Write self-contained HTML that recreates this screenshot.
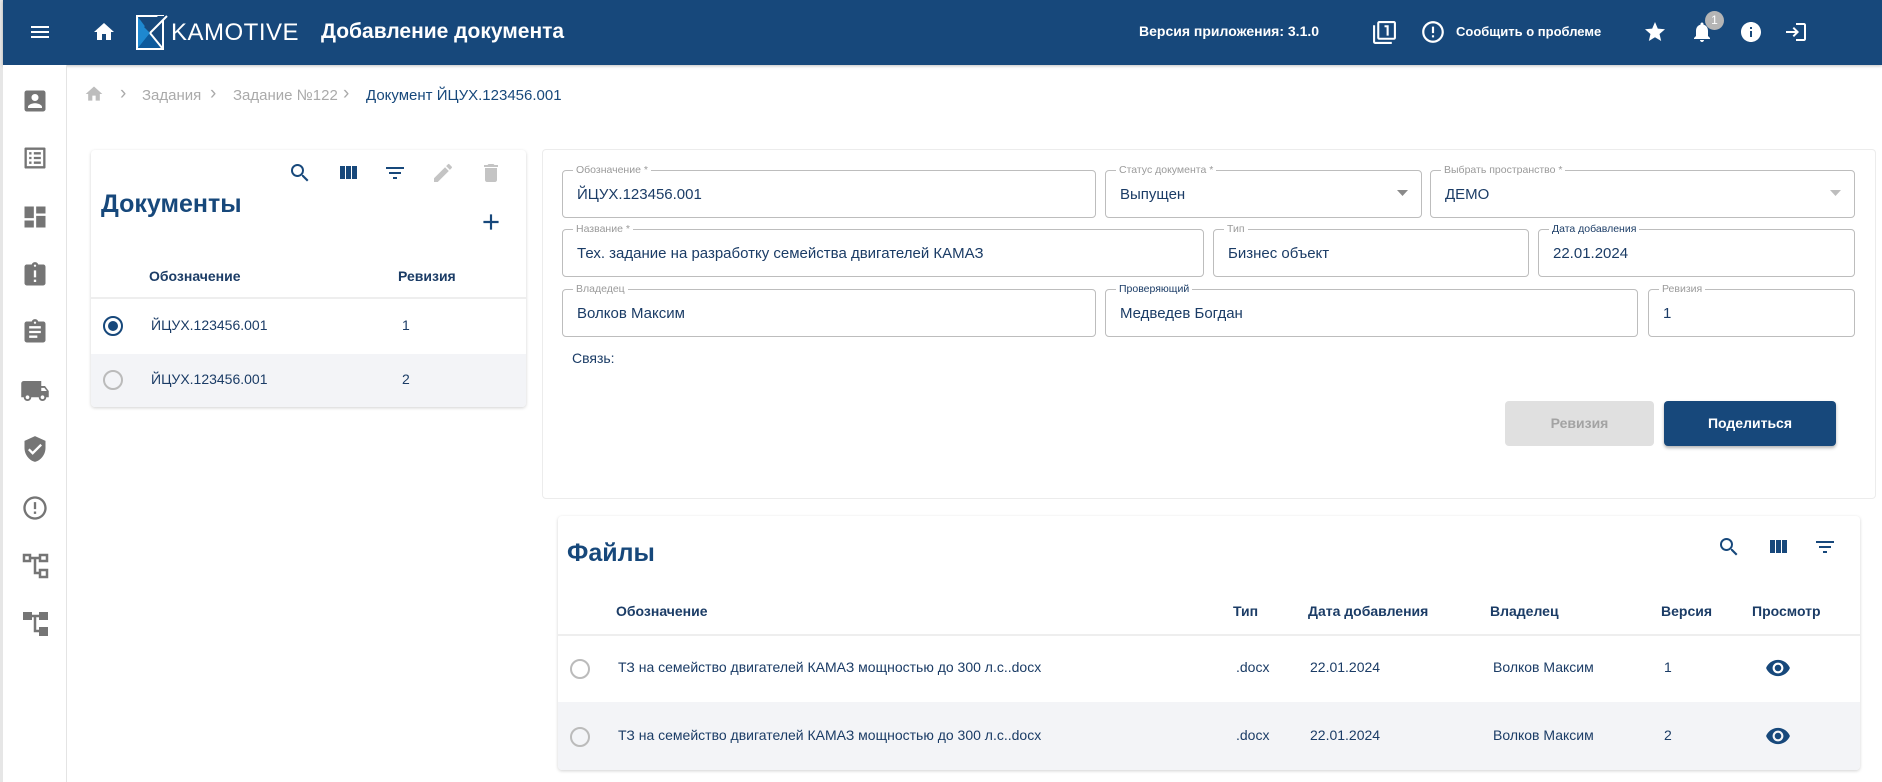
<!DOCTYPE html>
<html><head><meta charset="utf-8"><style>
*{box-sizing:border-box;margin:0;padding:0}
body{width:1882px;height:782px;overflow:hidden;background:#fff;font-family:"Liberation Sans","Noto Sans CJK SC",sans-serif;position:relative;color:#1b3c66}
.a{position:absolute}
svg{display:block}
.hdr{left:3px;top:0;width:1879px;height:65px;background:#17487b;box-shadow:0 1px 3px rgba(0,0,0,.25)}
.strip{left:0;top:0;width:3px;height:782px;background:#e6e6e6}
.side{left:3px;top:65px;width:64px;height:717px;border-right:1px solid #e4e4e4;background:#fff}
.w{color:#fff}
.card{background:#fff;border-radius:4px;box-shadow:0 1px 3px rgba(0,0,0,.18)}
.fld{position:absolute;border:1px solid #bdbdbd;border-radius:4px;height:48px}
.fld .l{position:absolute;top:-7px;left:10px;background:#fff;padding:0 3px;font-size:10.5px;color:#9a9a9a;line-height:12px}
.fld .l.d{color:#1b3c66}
.fld .v{position:absolute;left:14px;top:15px;font-size:15px;color:#1b3c66}
.th{font-size:14px;font-weight:bold;color:#1b3c66}
.td{font-size:14px;color:#1b3c66}
.radio{width:20px;height:20px;border:2px solid #bbb;border-radius:50%}
.ch{font-size:19px;color:#aaa}
</style></head><body>
<div class="a strip"></div>
<div class="a hdr"></div>
<svg class="a" style="left:28px;top:20px" width="24" height="24" viewBox="0 0 24 24"><path fill="#fff" d="M3 18h18v-2H3v2zm0-5h18v-2H3v2zm0-7v2h18V6H3z"/></svg>
<svg class="a" style="left:92px;top:20px" width="24" height="24" viewBox="0 0 24 24"><path fill="#fff" d="M10 20v-6h4v6h5v-8h3L12 3 2 12h3v8z"/></svg>
<svg class="a" style="left:136px;top:15px" width="34" height="35" viewBox="0 0 34 35"><rect x="1" y="1" width="26" height="33" fill="none" stroke="#fff" stroke-width="2"/><polygon points="2,2 2,33 14,18" fill="#1e88d0"/><polygon points="2,33 26,33 14,18" fill="#0d5a9c"/><polygon points="14,18 32,1 22,1 8,12" fill="#17487b"/><path d="M14 18 L31 1 M14 18 L27 34" stroke="#fff" stroke-width="2" fill="none"/></svg>
<div class="a w" style="left:171px;top:19px;font-size:24px;letter-spacing:0.5px">KAMOTIVE</div>
<div class="a w" style="left:321px;top:20px;font-size:21px;font-weight:bold">Добавление документа</div>
<div class="a w" style="left:1139px;top:23px;font-size:14px;font-weight:bold">Версия приложения: 3.1.0</div>
<svg class="a" style="left:1372px;top:20px" width="25" height="25" viewBox="0 0 24 24"><path fill="#fff" d="M3 5H1v16c0 1.1.9 2 2 2h16v-2H3V5zm11 10h2V5h-4v2h2v8zm7-14H7c-1.1 0-2 .9-2 2v14c0 1.1.9 2 2 2h14c1.1 0 2-.9 2-2V3c0-1.1-.9-2-2-2zm0 16H7V3h14v14z"/></svg>
<svg class="a" style="left:1420px;top:19px" width="26" height="26" viewBox="0 0 24 24"><path fill="#fff" d="M11 15h2v2h-2zm0-8h2v6h-2zm.99-5C6.47 2 2 6.48 2 12s4.47 10 9.99 10C17.52 22 22 17.52 22 12S17.520 2 11.99 2zM12 20c-4.42 0-8-3.58-8-8s3.58-8 8-8 8 3.58 8 8-3.58 8-8 8z"/></svg>
<div class="a w" style="left:1456px;top:24px;font-size:13px;font-weight:bold">Сообщить о проблеме</div>
<svg class="a" style="left:1643px;top:20px" width="24" height="24" viewBox="0 0 24 24"><path fill="#fff" d="M12 17.27L18.18 21l-1.64-7.03L22 9.24l-7.19-.61L12 2 9.19 8.630 2 9.24l5.46 4.73L5.82 21z"/></svg>
<svg class="a" style="left:1690px;top:20px" width="24" height="24" viewBox="0 0 24 24"><path fill="#fff" d="M12 22c1.1 0 2-.9 2-2h-4c0 1.1.89 2 2 2zm6-6v-5c0-3.07-1.64-5.64-4.5-6.32V4c0-.83-.67-1.5-1.5-1.5s-1.5.67-1.5 1.5v.68C7.63 5.36 6 7.92 6 11v5l-2 2v1h16v-1l-2-2z"/></svg>
<div class="a" style="left:1705px;top:11px;width:19px;height:19px;border-radius:50%;background:#b5b5b5;color:#fff;font-size:12px;text-align:center;line-height:19px">1</div>
<svg class="a" style="left:1739px;top:20px" width="24" height="24" viewBox="0 0 24 24"><path fill="#fff" d="M12 2C6.48 2 2 6.48 2 12s4.48 10 10 10 10-4.48 10-10S17.52 2 12 2zm1 15h-2v-6h2v6zm0-8h-2V7h2v2z"/></svg>
<svg class="a" style="left:1784px;top:20px" width="24" height="24" viewBox="0 0 24 24"><path fill="#fff" d="M10 7L8.6 8.4l2.6 2.6H2v2h9.2l-2.6 2.6L10 17l5-5-5-5zm10 12h-8v2h8c1.1 0 2-.9 2-2V5c0-1.1-.9-2-2-2h-8v2h8v14z"/></svg>

<div class="a side"></div>
<svg class="a" style="left:21px;top:87px" width="28" height="28" viewBox="0 0 24 24"><path fill="#757575" d="M3 5v14a2 2 0 002 2h14c1.1 0 2-.9 2-2V5c0-1.1-.9-2-2-2H5a2 2 0 00-2 2zm12 4c0 1.66-1.34 3-3 3s-3-1.34-3-3 1.34-3 3-3 3 1.34 3 3zm-9 8c0-2 4-3.1 6-3.1s6 1.1 6 3.1v1H6v-1z"/></svg>
<svg class="a" style="left:21px;top:144px" width="28" height="28" viewBox="0 0 24 24"><path fill="#757575" d="M19 5v14H5V5h14m1.1-2H3.9c-.5 0-.9.4-.9.9v16.2c0 .4.4.9.9.9h16.2c.4 0 .9-.5.9-.9V3.9c0-.5-.5-.9-.9-.9zM11 7h6v2h-6V7zm0 4h6v2h-6v-2zm0 4h6v2h-6zM7 7h2v2H7zm0 4h2v2H7zm0 4h2v2H7z"/></svg>
<svg class="a" style="left:21px;top:203px" width="28" height="28" viewBox="0 0 24 24"><path fill="#757575" d="M3 13h8V3H3v10zm0 8h8v-6H3v6zm10 0h8V11h-8v10zm0-18v6h8V3h-8z"/></svg>
<svg class="a" style="left:21px;top:261px" width="28" height="28" viewBox="0 0 24 24"><path fill="#757575" d="M19 3h-4.18C14.4 1.84 13.3 1 12 1c-1.3 0-2.4.84-2.82 2H5c-1.1 0-2 .9-2 2v14c0 1.1.9 2 2 2h14c1.1 0 2-.9 2-2V5c0-1.1-.9-2-2-2zm-6 15h-2v-2h2v2zm0-4h-2V8h2v6zm-1-9c-.55 0-1-.45-1-1s.45-1 1-1 1 .45 1 1-.45 1-1 1z"/></svg>
<svg class="a" style="left:21px;top:318px" width="28" height="28" viewBox="0 0 24 24"><path fill="#757575" d="M19 3h-4.18C14.4 1.84 13.3 1 12 1c-1.3 0-2.4.84-2.82 2H5c-1.1 0-2 .9-2 2v14c0 1.1.9 2 2 2h14c1.1 0 2-.9 2-2V5c0-1.1-.9-2-2-2zm-7 0c.55 0 1 .45 1 1s-.45 1-1 1-1-.45-1-1 .45-1 1-1zm2 14H7v-2h7v2zm3-4H7v-2h10v2zm0-4H7V7h10v2z"/></svg>
<svg class="a" style="left:20px;top:376px" width="30" height="30" viewBox="0 0 24 24"><path fill="#757575" d="M20 8h-3V4H3c-1.1 0-2 .9-2 2v11h2c0 1.66 1.34 3 3 3s3-1.34 3-3h6c0 1.66 1.34 3 3 3s3-1.34 3-3h2v-5l-3-4zM6 18.5c-.83 0-1.5-.67-1.5-1.5s.67-1.5 1.5-1.5 1.5.67 1.5 1.5-.67 1.5-1.5 1.5zm13.5-9l1.96 2.5H17V9.5h2.5zm-1.5 9c-.83 0-1.5-.67-1.5-1.5s.67-1.5 1.5-1.5 1.5.67 1.5 1.5-.67 1.5-1.5 1.5z"/></svg>
<svg class="a" style="left:21px;top:435px" width="28" height="28" viewBox="0 0 24 24"><path fill="#757575" d="M12 1L3 5v6c0 5.55 3.84 10.74 9 12 5.16-1.26 9-6.45 9-12V5l-9-4zm-2 16l-4-4 1.41-1.41L10 14.17l6.59-6.59L18 9l-8 8z"/></svg>
<svg class="a" style="left:21px;top:494px" width="28" height="28" viewBox="0 0 24 24"><path fill="#757575" d="M11 15h2v2h-2zm0-8h2v6h-2zm.99-5C6.47 2 2 6.48 2 12s4.47 10 9.99 10C17.52 22 22 17.52 22 12S17.52 2 11.99 2zM12 20c-4.42 0-8-3.58-8-8s3.58-8 8-8 8 3.58 8 8-3.58 8-8 8z"/></svg>
<svg class="a" style="left:22px;top:553px" width="28" height="26" viewBox="0 0 28 26"><g fill="none" stroke="#757575" stroke-width="2.5"><rect x="2" y="2" width="6" height="6"/><rect x="18" y="2" width="7" height="6"/><rect x="18" y="17" width="7" height="7"/><path d="M8 5h10M13 5v15h5"/></g></svg>
<svg class="a" style="left:22px;top:611px" width="28" height="26" viewBox="0 0 28 26"><g fill="#757575"><rect x="1" y="1" width="9" height="8"/><rect x="17" y="1" width="9" height="8"/><rect x="17" y="16" width="9" height="9"/></g><path d="M10 5h7M13 5v15h4" stroke="#757575" stroke-width="2.5" fill="none"/></svg>

<svg class="a" style="left:84px;top:84px" width="20" height="20" viewBox="0 0 24 24"><path fill="#bdbdbd" d="M10 20v-6h4v6h5v-8h3L12 3 2 12h3v8z"/></svg>
<div class="a ch" style="left:120px;top:83px">›</div>
<div class="a" style="left:142px;top:87px;font-size:15px;color:#aaa">Задания</div>
<div class="a ch" style="left:210px;top:83px">›</div>
<div class="a" style="left:233px;top:87px;font-size:15px;color:#aaa">Задание №122</div>
<div class="a ch" style="left:343px;top:83px">›</div>
<div class="a" style="left:366px;top:87px;font-size:15px;color:#17487b">Документ ЙЦУХ.123456.001</div>

<div class="a card" style="left:91px;top:150px;width:435px;height:257px;overflow:hidden">
 <div class="a" style="left:10px;top:40px;font-size:25px;color:#17487b;font-weight:bold">Документы</div>
 <svg class="a" style="left:197px;top:11px" width="24" height="24" viewBox="0 0 24 24"><path fill="#17487b" d="M15.5 14h-.79l-.28-.27A6.471 6.471 0 0016 9.5 6.5 6.5 0 109.5 16c1.61 0 3.09-.59 4.230-1.57l.27.28v.79l5 4.99L20.49 19l-4.99-5zm-6 0C7.01 14 5 11.99 5 9.5S7.01 5 9.5 5 14 7.01 14 9.5 11.99 14 9.5 14z"/></svg>
 <svg class="a" style="left:245px;top:11px" width="24" height="24" viewBox="0 0 24 24"><path fill="#17487b" d="M10 18h5V5h-5v13zm-6 0h5V5H4v13zM16 5v13h5V5h-5z"/></svg>
 <svg class="a" style="left:292px;top:11px" width="24" height="24" viewBox="0 0 24 24"><path fill="#17487b" d="M10 18h4v-2h-4v2zM3 6v2h18V6H3zm3 7h12v-2H6v2z"/></svg>
 <svg class="a" style="left:340px;top:11px" width="24" height="24" viewBox="0 0 24 24"><path fill="#c4c4c4" d="M3 17.25V21h3.75L17.81 9.94l-3.75-3.75L3 17.25zM20.71 7.04a.996.996 0 000-1.41l-2.34-2.34a.996.996 0 00-1.41 0l-1.83 1.83 3.75 3.75 1.83-1.83z"/></svg>
 <svg class="a" style="left:388px;top:11px" width="24" height="24" viewBox="0 0 24 24"><path fill="#c4c4c4" d="M6 19c0 1.1.9 2 2 2h8c1.1 0 2-.9 2-2V7H6v12zM19 4h-3.5l-1-1h-5l-1 1H5v2h14V4z"/></svg>
 <svg class="a" style="left:387px;top:59px" width="26" height="26" viewBox="0 0 24 24"><path fill="#17487b" d="M19 13h-6v6h-2v-6H5v-2h6V5h2v6h6v2z"/></svg>
 <div class="a th" style="left:58px;top:118px">Обозначение</div>
 <div class="a th" style="left:307px;top:118px">Ревизия</div>
 <div class="a" style="left:0;top:147px;width:435px;height:2px;background:#eee"></div>
 <div class="a" style="left:12px;top:166px;width:20px;height:20px;border:2px solid #17487b;border-radius:50%"><div style="margin:3px;width:10px;height:10px;border-radius:50%;background:#17487b"></div></div>
 <div class="a td" style="left:60px;top:167px">ЙЦУХ.123456.001</div>
 <div class="a td" style="left:311px;top:167px">1</div>
 <div class="a" style="left:0;top:204px;width:435px;height:53px;background:#f3f4f7"></div>
 <div class="a radio" style="left:12px;top:220px"></div>
 <div class="a td" style="left:60px;top:221px">ЙЦУХ.123456.001</div>
 <div class="a td" style="left:311px;top:221px">2</div>
</div>

<div class="a" style="left:542px;top:149px;width:1334px;height:350px;border:1px solid #ececec;border-radius:4px;background:#fff"></div>
<div class="fld" style="left:562px;top:170px;width:534px"><span class="l">Обозначение *</span><span class="v">ЙЦУХ.123456.001</span></div>
<div class="fld" style="left:1105px;top:170px;width:317px"><span class="l">Статус документа *</span><span class="v">Выпущен</span><svg class="a" style="right:12px;top:18px" width="12" height="8"><path d="M0 1h11l-5.5 6z" fill="#8a8a8a"/></svg></div>
<div class="fld" style="left:1430px;top:170px;width:425px"><span class="l">Выбрать пространство *</span><span class="v">ДЕМО</span><svg class="a" style="right:12px;top:18px" width="12" height="8"><path d="M0 1h11l-5.5 6z" fill="#bdbdbd"/></svg></div>
<div class="fld" style="left:562px;top:229px;width:642px"><span class="l">Название *</span><span class="v">Тех. задание на разработку семейства двигателей КАМАЗ</span></div>
<div class="fld" style="left:1213px;top:229px;width:316px"><span class="l">Тип</span><span class="v">Бизнес объект</span></div>
<div class="fld" style="left:1538px;top:229px;width:317px"><span class="l d">Дата добавления</span><span class="v">22.01.2024</span></div>
<div class="fld" style="left:562px;top:289px;width:534px"><span class="l">Владедец</span><span class="v">Волков Максим</span></div>
<div class="fld" style="left:1105px;top:289px;width:533px"><span class="l d">Проверяющий</span><span class="v">Медведев Богдан</span></div>
<div class="fld" style="left:1648px;top:289px;width:207px"><span class="l">Ревизия</span><span class="v">1</span></div>
<div class="a" style="left:572px;top:350px;font-size:14px;color:#1b3c66">Связь:</div>
<div class="a" style="left:1505px;top:401px;width:149px;height:45px;background:#e0e0e0;border-radius:4px;color:#a3a3a3;font-size:14px;font-weight:bold;text-align:center;line-height:45px">Ревизия</div>
<div class="a" style="left:1664px;top:401px;width:172px;height:45px;background:#17487b;border-radius:4px;color:#fff;font-size:14px;font-weight:bold;text-align:center;line-height:45px;box-shadow:0 2px 3px rgba(0,0,0,.3)">Поделиться</div>

<div class="a card" style="left:558px;top:516px;width:1302px;height:254px;overflow:hidden">
 <div class="a" style="left:9px;top:23px;font-size:25px;color:#17487b;font-weight:bold">Файлы</div>
 <svg class="a" style="left:1159px;top:19px" width="24" height="24" viewBox="0 0 24 24"><path fill="#17487b" d="M15.5 14h-.79l-.28-.27A6.471 6.471 0 0016 9.5 6.5 6.5 0 109.5 16c1.61 0 3.09-.59 4.23-1.57l.27.28v.79l5 4.99L20.49 19l-4.99-5zm-6 0C7.01 14 5 11.99 5 9.5S7.01 5 9.5 5 14 7.01 14 9.5 11.99 14 9.5 14z"/></svg>
 <svg class="a" style="left:1208px;top:19px" width="24" height="24" viewBox="0 0 24 24"><path fill="#17487b" d="M10 18h5V5h-5v13zm-6 0h5V5H4v13zM16 5v13h5V5h-5z"/></svg>
 <svg class="a" style="left:1255px;top:19px" width="24" height="24" viewBox="0 0 24 24"><path fill="#17487b" d="M10 18h4v-2h-4v2zM3 6v2h18V6H3zm3 7h12v-2H6v2z"/></svg>
 <div class="a th" style="left:58px;top:87px">Обозначение</div>
 <div class="a th" style="left:675px;top:87px">Тип</div>
 <div class="a th" style="left:750px;top:87px">Дата добавления</div>
 <div class="a th" style="left:932px;top:87px">Владелец</div>
 <div class="a th" style="left:1103px;top:87px">Версия</div>
 <div class="a th" style="left:1194px;top:87px">Просмотр</div>
 <div class="a" style="left:0;top:118px;width:1302px;height:2px;background:#eee"></div>
 <div class="a radio" style="left:12px;top:143px"></div>
 <div class="a td" style="left:60px;top:143px">ТЗ на семейство двигателей КАМАЗ мощностью до 300 л.с..docx</div>
 <div class="a td" style="left:678px;top:143px">.docx</div>
 <div class="a td" style="left:752px;top:143px">22.01.2024</div>
 <div class="a td" style="left:935px;top:143px">Волков Максим</div>
 <div class="a td" style="left:1106px;top:143px">1</div>
 <svg class="a" style="left:1207px;top:139px" width="26" height="26" viewBox="0 0 24 24"><path fill="#17487b" d="M12 4.5C7 4.5 2.73 7.61 1 12c1.73 4.39 6 7.5 11 7.5s9.27-3.11 11-7.5c-1.73-4.39-6-7.5-11-7.5zM12 17c-2.76 0-5-2.24-5-5s2.24-5 5-5 5 2.24 5 5-2.24 5-5 5zm0-8c-1.66 0-3 1.34-3 3s1.34 3 3 3 3-1.34 3-3-1.34-3-3-3z"/></svg>
 <div class="a" style="left:0;top:186px;width:1302px;height:68px;background:#f3f4f7"></div>
 <div class="a radio" style="left:12px;top:211px"></div>
 <div class="a td" style="left:60px;top:211px">ТЗ на семейство двигателей КАМАЗ мощностью до 300 л.с..docx</div>
 <div class="a td" style="left:678px;top:211px">.docx</div>
 <div class="a td" style="left:752px;top:211px">22.01.2024</div>
 <div class="a td" style="left:935px;top:211px">Волков Максим</div>
 <div class="a td" style="left:1106px;top:211px">2</div>
 <svg class="a" style="left:1207px;top:207px" width="26" height="26" viewBox="0 0 24 24"><path fill="#17487b" d="M12 4.5C7 4.5 2.73 7.61 1 12c1.73 4.39 6 7.5 11 7.5s9.27-3.11 11-7.5c-1.73-4.39-6-7.5-11-7.5zM12 17c-2.76 0-5-2.24-5-5s2.24-5 5-5 5 2.24 5 5-2.24 5-5 5zm0-8c-1.66 0-3 1.34-3 3s1.34 3 3 3 3-1.34 3-3-1.34-3-3-3z"/></svg>
</div>
</body></html>
